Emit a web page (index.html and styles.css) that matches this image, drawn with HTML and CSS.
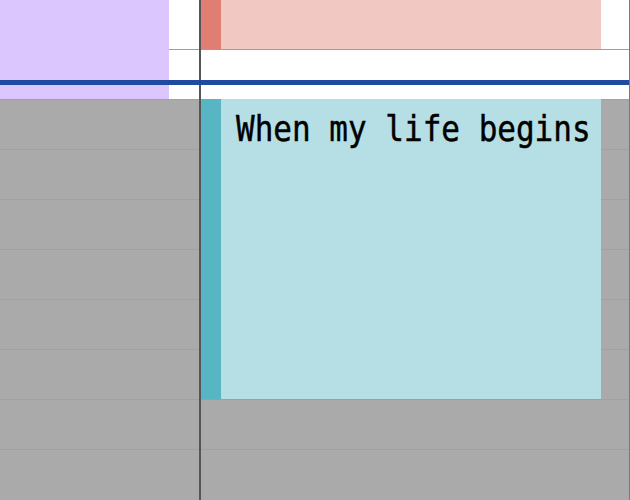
FILE: index.html
```html
<!DOCTYPE html>
<html>
<head>
<meta charset="utf-8">
<link rel="stylesheet" href="styles.css">
</head>
<body>
<div class="cal">
  <div class="gutter">
    <div class="head-cell">
      <div class="allday-purple"></div>
      <div class="head-row first"></div>
      <div class="head-row"></div>
    </div>
    <div class="rows">
      <div class="row"></div><div class="row"></div><div class="row"></div><div class="row"></div>
      <div class="row"></div><div class="row"></div><div class="row"></div><div class="row last"></div>
    </div>
  </div>
  <div class="divider"></div>
  <div class="day">
    <div class="head-cell">
      <div class="head-row first">
        <div class="event pink"><span class="strip"></span><span class="body"></span></div>
      </div>
      <div class="head-row"></div>
    </div>
    <div class="rows">
      <div class="event cyan">
        <span class="strip"></span>
        <span class="body"><span class="title">When my life begins</span></span>
      </div>
      <div class="row"></div><div class="row"></div><div class="row"></div><div class="row"></div>
      <div class="row"></div><div class="row"></div><div class="row"></div><div class="row last"></div>
    </div>
  </div>
  <div class="edge"></div>
  <div class="now-line"></div>
</div>
</body>
</html>
```

FILE: styles.css
```css
html, body {
  margin: 0;
  padding: 0;
  background: #ffffff;
}
body {
  width: 630px;
  height: 500px;
  overflow: hidden;
}
.cal {
  position: relative;
  display: flex;
  width: 630px;
  height: 500px;
  overflow: hidden;
}
.gutter {
  width: 199px;
  display: flex;
  flex-direction: column;
}
.divider {
  width: 2px;
  background: #555555;
}
.day {
  flex: 1;
  display: flex;
  flex-direction: column;
}
.edge {
  width: 1px;
  background: #7a7a7a;
}
.head-cell {
  position: relative;
  height: 99px;
  display: flex;
  flex-direction: column;
  background: #ffffff;
}
.head-row {
  height: 49px;
  position: relative;
}
.head-row.first {
  border-bottom: 1px solid #9d9d9d;
}
.allday-purple {
  position: absolute;
  left: 0;
  top: 0;
  width: 169px;
  height: 99px;
  background: #dbc6fe;
  z-index: 1;
}
.rows {
  position: relative;
  flex: 1;
  display: flex;
  flex-direction: column;
  background: #aaaaaa;
  overflow: hidden;
}
.row {
  height: 49px;
  flex: none;
  border-top: 1px solid #a1a1a1;
}
.row.last {
  height: 50px;
}
.event {
  position: absolute;
  left: 0;
  display: flex;
  width: 400px;
}
.event .strip {
  width: 20px;
}
.event .body {
  flex: 1;
}
.pink {
  top: 0;
  height: 49px;
}
.pink .strip { background: #e07e74; }
.pink .body { background: #f1c8c2; }
.cyan {
  top: 0;
  height: 300px;
  border-bottom: 1px solid #9e9e9e;
}
.cyan .strip { background: #58b5c3; }
.cyan .body {
  background: #b5dfe5;
  padding: 13px 0 0 15px;
}
.title {
  display: inline-block;
  font-family: "DejaVu Sans Mono", monospace;
  font-size: 31px;
  line-height: 36px;
  color: #000000;
  -webkit-text-stroke: 0.4px #000000;
  transform: scaleY(1.15);
  transform-origin: 0 28px;
}
.now-line {
  position: absolute;
  left: 0;
  top: 80px;
  width: 629px;
  height: 5px;
  background: #1f4aa0;
  z-index: 2;
}
```
